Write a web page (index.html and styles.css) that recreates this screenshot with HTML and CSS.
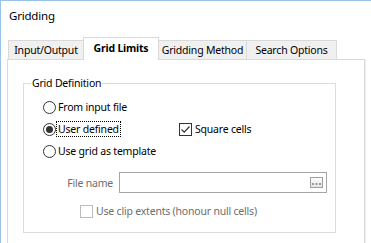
FILE: index.html
```html
<!DOCTYPE html>
<html lang="en">
<head>
    <meta charset="UTF-8">
    <meta name="viewport" content="width=device-width, initial-scale=1.0">
    <title>Gridding</title>
    <link rel="stylesheet" href="styles.css">
</head>
<body>
    <div class="dialog">
        <div class="dialog-title">Gridding</div>

        <div class="tabs">
            <div class="tab tab-io">Input/Output</div>
            <div class="tab tab-limits active">Grid Limits</div>
            <div class="tab tab-method">Gridding Method</div>
            <div class="tab tab-search">Search Options</div>
        </div>

        <div class="tab-panel">
            <fieldset class="group">
                <legend>Grid Definition</legend>

                <div class="option-row">
                    <span class="radio"></span>
                    <span>From input file</span>
                </div>

                <div class="option-row">
                    <div class="option-main">
                        <span class="radio checked"></span>
                        <span class="focus-label">User defined</span>
                    </div>
                    <div class="option-check">
                        <span class="checkbox">
                            <svg width="11" height="11" viewBox="0 0 11 11">
                                <path d="M1.5 5.5 L4.2 8.2 L9.5 2.5" fill="none" stroke="#333" stroke-width="1.2"/>
                            </svg>
                        </span>
                        <span>Square cells</span>
                    </div>
                </div>

                <div class="option-row">
                    <span class="radio"></span>
                    <span>Use grid as template</span>
                </div>

                <div class="file-row">
                    <span class="file-label">File name</span>
                    <div class="file-input">
                        <span class="browse-button">
                            <svg width="11" height="9" viewBox="0 0 11 9">
                                <rect x="1" y="5" width="2" height="2" fill="#9a9a9a"/>
                                <rect x="4.5" y="5" width="2" height="2" fill="#9a9a9a"/>
                                <rect x="8" y="5" width="2" height="2" fill="#9a9a9a"/>
                            </svg>
                        </span>
                    </div>
                </div>

                <div class="clip-row">
                    <span class="checkbox disabled"></span>
                    <span>Use clip extents (honour null cells)</span>
                </div>
            </fieldset>
        </div>
    </div>
</body>
</html>
```

FILE: styles.css
```css
body {
    margin: 0;
    padding: 0;
    background-color: #fff;
    font-family: "Noto Sans", "Open Sans", sans-serif;
    font-size: 10.5px;
    letter-spacing: -0.2px;
    color: #000;
    overflow: hidden;
}

.dialog {
    width: 370px;
    height: 242px;
    border-top: 1px solid #99c4e8;
    border-left: 1px solid #99c4e8;
    background-color: #fff;
}

.dialog-title {
    padding: 7px 0 0 8px;
    font-size: 11.5px;
    line-height: 16px;
}

/* tab strip */
.tabs {
    display: flex;
    align-items: flex-end;
    height: 22px;
    margin-top: 13px;
    margin-left: 7px;
}

.tab {
    box-sizing: border-box;
    height: 19px;
    padding-top: 1px;
    line-height: 16px;
    text-align: center;
    background-color: #f0f0f0;
    border: 1px solid #d9d9d9;
    border-bottom: none;
    margin-left: -1px;
    white-space: nowrap;
}

.tab-io {
    width: 76px;
    margin-left: 0;
}

.tab-limits {
    width: 76px;
}

.tab-method {
    width: 89px;
}

.tab-search {
    width: 91px;
}

.tab.active {
    position: relative;
    z-index: 1;
    height: 23px;
    margin-bottom: -1px;
    padding-top: 2px;
    background-color: #fff;
    font-weight: bold;
}

.tab-panel {
    box-sizing: border-box;
    width: 358px;
    height: 184px;
    margin-left: 6px;
    padding: 15px 28px 0 15px;
    border: 1px solid #d9d9d9;
    border-bottom: none;
    box-shadow: 1px 0 0 #efefef;
}

/* group box */
.group {
    margin: 0;
    padding: 5px 0 13px 7px;
    border: 1px solid #dcdcdc;
}

.group legend {
    padding: 0 1px;
    line-height: 16px;
}

.option-row {
    display: flex;
    align-items: center;
    height: 22px;
    margin-left: 12px;
}

.option-main {
    display: flex;
    align-items: center;
    width: 136px;
}

.option-check {
    display: flex;
    align-items: center;
}

.radio {
    box-sizing: border-box;
    display: inline-flex;
    align-items: center;
    justify-content: center;
    width: 13px;
    height: 13px;
    margin-right: 2px;
    border: 1px solid #333;
    border-radius: 50%;
    background-color: #fff;
}

.radio.checked::after {
    content: "";
    width: 7px;
    height: 7px;
    border-radius: 50%;
    background-color: #333;
}

.focus-label {
    padding: 0 1px;
    margin-left: -1px;
    outline: 1px dotted #000;
    line-height: 14px;
}

.checkbox {
    box-sizing: border-box;
    display: inline-flex;
    align-items: center;
    justify-content: center;
    width: 13px;
    height: 13px;
    margin-right: 3px;
    border: 1px solid #333;
    background-color: #fff;
}

.checkbox.disabled {
    border-color: #bcbcbc;
}

/* file name row */
.file-row {
    display: flex;
    align-items: center;
    margin-top: 10px;
    margin-left: 12px;
    color: #6d6d6d;
}

.file-label {
    width: 70px;
    text-align: right;
    margin-right: 6px;
}

.file-input {
    box-sizing: border-box;
    display: flex;
    align-items: center;
    justify-content: flex-end;
    width: 208px;
    height: 21px;
    padding-right: 3px;
    border: 1px solid #a5a5a5;
    background-color: #fff;
}

.browse-button {
    box-sizing: border-box;
    display: flex;
    align-items: center;
    justify-content: center;
    width: 13px;
    height: 11px;
    border: 1px solid #a0a0a0;
    background: linear-gradient(#fdfdfd, #e4e4e4);
}

.clip-row {
    display: flex;
    align-items: center;
    height: 16px;
    margin-top: 10px;
    margin-left: 49px;
    color: #6d6d6d;
}
```
